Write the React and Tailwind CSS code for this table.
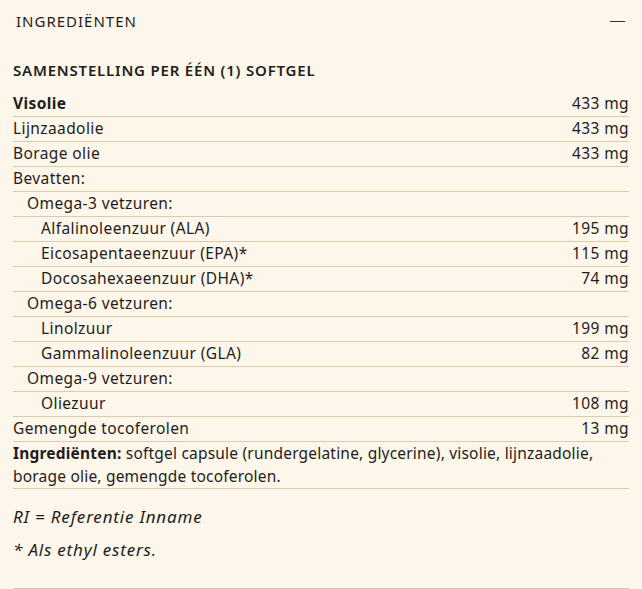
const rows = [
  { label: "Visolie", value: "433 mg", bold: true },
  { label: "Lijnzaadolie", value: "433 mg" },
  { label: "Borage olie", value: "433 mg" },
  { label: "Bevatten:", value: "" },
  { label: "Omega-3 vetzuren:", value: "", level: 1 },
  { label: "Alfalinoleenzuur (ALA)", value: "195 mg", level: 2 },
  { label: "Eicosapentaeenzuur (EPA)*", value: "115 mg", level: 2 },
  { label: "Docosahexaeenzuur (DHA)*", value: "74 mg", level: 2 },
  { label: "Omega-6 vetzuren:", value: "", level: 1 },
  { label: "Linolzuur", value: "199 mg", level: 2 },
  { label: "Gammalinoleenzuur (GLA)", value: "82 mg", level: 2 },
  { label: "Omega-9 vetzuren:", value: "", level: 1 },
  { label: "Oliezuur", value: "108 mg", level: 2 },
  { label: "Gemengde tocoferolen", value: "13 mg" },
];

function Row({ label, value, bold, level }) {
  const indent = level === 2 ? "pl-[28px]" : level === 1 ? "pl-[14px]" : "";
  return (
    <div className="flex h-[25px] items-center justify-between border-b border-[#dccbaa]">
      <span className={`${indent} ${bold ? "font-bold" : ""}`}>{label}</span>
      <span>{value}</span>
    </div>
  );
}

export default function App() {
  return (
    <div
      className="min-h-[589px] bg-[#fdf6ea] px-[13px] text-[15.5px] tracking-[0.4px] text-[#1f1d1d]"
      style={{ fontFamily: '"Noto Sans", sans-serif' }}
    >
      <div className="border-b border-[#dccbaa] pb-[26px]">
        <div className="flex h-[42px] items-center justify-between pl-[3px] pr-[4px]">
          <span className="text-[15px] tracking-[1px]">INGREDIËNTEN</span>
          <span className="block h-px w-[15px] bg-[#333]"></span>
        </div>
        <h2 className="mt-[18px] mb-[12px] text-[15px] leading-[20px] font-semibold tracking-[0.8px]">
          SAMENSTELLING PER ÉÉN (1) SOFTGEL
        </h2>
        <div>
          {rows.map((r) => (
            <Row key={r.label} {...r} />
          ))}
          <p className="border-b border-[#dccbaa] leading-[23px] tracking-[0.2px]">
            <span className="font-bold">Ingrediënten:</span> softgel capsule
            (rundergelatine, glycerine), visolie, lijnzaadolie, borage olie,
            gemengde tocoferolen.
          </p>
        </div>
        <p className="mt-[16px] text-[17px] leading-[24px] tracking-[0.8px] italic">
          RI = Referentie Inname
        </p>
        <p className="mt-[9px] text-[17px] leading-[24px] tracking-[0.8px] italic">
          * Als ethyl esters.
        </p>
      </div>
    </div>
  );
}
